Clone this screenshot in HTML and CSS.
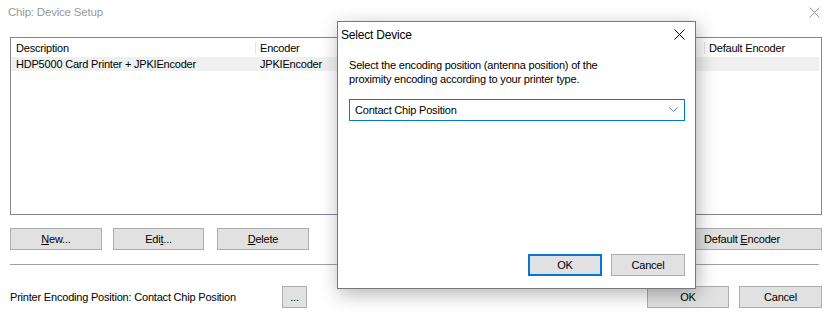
FILE: index.html
```html
<!DOCTYPE html>
<html lang="en">

<head>
    <meta charset="UTF-8">
    <title>Chip: Device Setup</title>
    <link rel="stylesheet" href="styles.css">
</head>

<body>
    <div class="window">
        <!-- title bar -->
        <div class="titlebar">
            <span class="title">Chip: Device Setup</span>
            <svg class="close" width="11" height="11" viewBox="0 0 11 11">
                <path d="M0.5 0.5 L10.5 10.5 M10.5 0.5 L0.5 10.5" stroke="#9a9a9a" stroke-width="1" fill="none" />
            </svg>
        </div>

        <div class="content">
            <!-- device list -->
            <div class="listview">
                <div class="list-header">
                    <div class="col col-desc">Description</div>
                    <div class="col col-enc">Encoder</div>
                    <div class="col col-fill"></div>
                    <div class="col col-def">Default Encoder</div>
                </div>
                <div class="list-row">
                    <div class="col col-desc">HDP5000 Card Printer + JPKIEncoder</div>
                    <div class="col col-enc">JPKIEncoder</div>
                </div>
            </div>

            <div class="button-row">
                <button class="btn btn-new"><u>N</u>ew...</button>
                <button class="btn btn-edit">Edi<u>t</u>...</button>
                <button class="btn btn-delete"><u>D</u>elete</button>
                <button class="btn btn-default">Default <u>E</u>ncoder</button>
            </div>

            <div class="separator"></div>

            <div class="footer">
                <span class="position-label">Printer Encoding Position: Contact Chip Position</span>
                <button class="btn btn-browse">...</button>
                <button class="btn btn-ok">OK</button>
                <button class="btn btn-cancel">Cancel</button>
            </div>
        </div>

        <!-- modal dialog -->
        <div class="dialog">
            <div class="dialog-title">
                <span>Select Device</span>
                <svg class="dialog-close" width="11" height="11" viewBox="0 0 11 11">
                    <path d="M0.5 0.5 L10.5 10.5 M10.5 0.5 L0.5 10.5" stroke="#000" stroke-width="1" fill="none" />
                </svg>
            </div>
            <div class="dialog-body">
                <p class="dialog-text">Select the encoding position (antenna position) of the<br>proximity encoding according to your printer type.</p>
                <div class="combo">
                    <span>Contact Chip Position</span>
                    <svg width="9" height="6" viewBox="0 0 9 6">
                        <path d="M0.5 0.5 L4.5 4.5 L8.5 0.5" stroke="#5b7fb3" stroke-width="1" fill="none" />
                    </svg>
                </div>
                <div class="dialog-buttons">
                    <button class="btn btn-dlg btn-primary">OK</button>
                    <button class="btn btn-dlg">Cancel</button>
                </div>
            </div>
        </div>
    </div>
</body>

</html>
```

FILE: styles.css
```css
/* global */

*,
 ::after,
 ::before {
    margin: 0;
    padding: 0;
    box-sizing: border-box;
}

body {
    background-color: #fff;
    font-family: "Liberation Sans", Arial, sans-serif;
    font-size: 11px;
    letter-spacing: -0.2px;
    color: #000;
}

.window {
    width: 832px;
    height: 318px;
    position: relative;
    overflow: hidden;
}

/* title bar */

.titlebar {
    height: 24px;
    display: flex;
    align-items: center;
    justify-content: space-between;
    padding: 0 12px 0 8px;
}

.title {
    color: #999;
    font-size: 11.5px;
}

.content {
    padding: 0 10px;
}

/* list */

.listview {
    margin-top: 13px;
    height: 178px;
    border: 1px solid #828790;
}

.list-header,
.list-row {
    display: flex;
}

.list-header {
    height: 19px;
    padding-top: 1px;
    align-items: center;
}

.list-row {
    height: 14px;
    align-items: center;
    background-color: #f0f0f0;
    margin-right: 2px;
}

.col {
    white-space: nowrap;
    padding-left: 5px;
}

.col-desc {
    width: 244px;
}

.col-enc {
    width: 120px;
}

.list-header .col-enc,
.list-header .col-def {
    border-left: 1px solid #e5e5e5;
    padding-left: 4px;
}

.col-fill {
    width: 329px;
}

.col-def {
    flex: 1;
}

/* buttons */

.btn {
    height: 22px;
    font-family: inherit;
    font-size: 11px;
    letter-spacing: -0.2px;
    color: #000;
    background-color: #e1e1e1;
    border: 1px solid #adadad;
}

.button-row {
    display: flex;
    margin-top: 13px;
}

.btn-new {
    width: 92px;
}

.btn-edit {
    width: 91px;
    margin-left: 11px;
}

.btn-delete {
    width: 92px;
    margin-left: 13px;
}

.btn-default {
    width: 160px;
    margin-left: auto;
}

.separator {
    margin-top: 14px;
    margin-right: 3px;
    height: 1px;
    background-color: #a0a0a0;
}

.footer {
    display: flex;
    align-items: center;
    margin-top: 21px;
}

.position-label {
    width: 272px;
}

.btn-browse {
    width: 25px;
}

.btn-ok {
    width: 82px;
    margin-left: auto;
}

.btn-cancel {
    width: 83px;
    margin-left: 10px;
}

/* dialog */

.dialog {
    position: absolute;
    left: 337px;
    top: 21px;
    width: 359px;
    height: 268px;
    background-color: #fff;
    border: 1px solid #777;
    box-shadow: 2px 5px 18px rgba(0, 0, 0, 0.3);
    display: flex;
    flex-direction: column;
}

.dialog-title {
    height: 25px;
    display: flex;
    align-items: center;
    justify-content: space-between;
    padding: 0 10px 0 3px;
    font-size: 12px;
}

.dialog-body {
    flex: 1;
    display: flex;
    flex-direction: column;
    padding: 11px 10px 12px 11px;
}

.dialog-text {
    line-height: 14px;
}

.combo {
    margin-top: 13px;
    height: 22px;
    border: 1px solid #0078d7;
    display: flex;
    align-items: center;
    justify-content: space-between;
    padding: 0 6px 0 5px;
}

.dialog-buttons {
    margin-top: auto;
    display: flex;
    justify-content: flex-end;
    gap: 9px;
}

.btn-dlg {
    width: 74px;
}

.btn-primary {
    border: 2px solid #0078d7;
}
```
